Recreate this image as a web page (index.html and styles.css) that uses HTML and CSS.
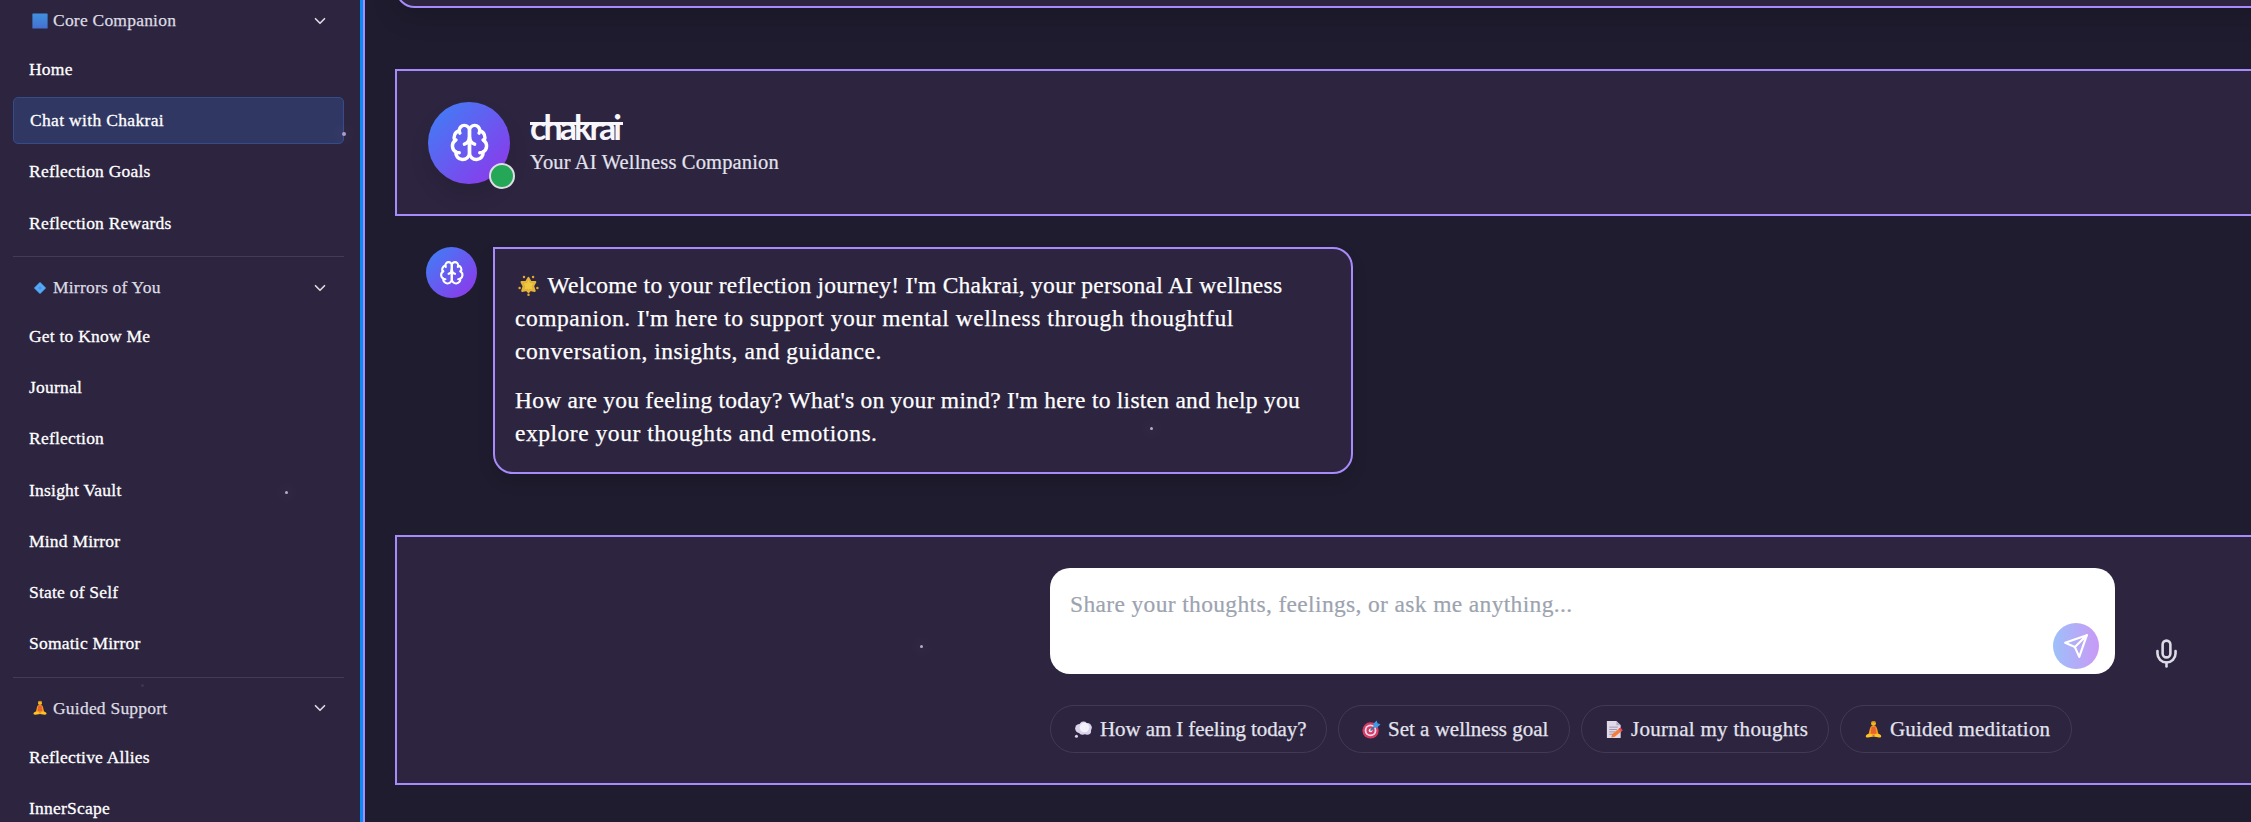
FILE: index.html
```html
<!DOCTYPE html>
<html lang="en">
<head>
<meta charset="utf-8">
<title>Chakrai</title>
<link rel="stylesheet" href="styles.css">
</head>
<body>
<svg class="defs" aria-hidden="true">
  <symbol id="brain" viewBox="0 0 24 24">
    <path d="M12 5a3 3 0 1 0-5.997.125 4 4 0 0 0-2.526 5.77 4 4 0 0 0 .556 6.588A4 4 0 1 0 12 18Z"/>
    <path d="M12 5a3 3 0 1 1 5.997.125 4 4 0 0 1 2.526 5.77 4 4 0 0 1-.556 6.588A4 4 0 1 1 12 18Z"/>
    <path d="M15 13a4.5 4.5 0 0 1-3-4 4.500 4.500 0 0 1-3 4"/>
    <path d="M17.599 6.500a3 3 0 0 0 .399-1.375M6.003 5.125A3 3 0 0 0 6.401 6.500M3.477 10.896a4 4 0 0 1 .585-.396M19.938 10.500a4 4 0 0 1 .585.396M6 18a4 4 0 0 1-1.967-.516M19.967 17.484A4 4 0 0 1 18 18"/>
  </symbol>
  <symbol id="chevron" viewBox="0 0 24 24"><path d="m6 9 6 6 6-6"/></symbol>
  <symbol id="yoga" viewBox="0 0 18 20">
    <circle cx="9" cy="3.600" r="2.600" fill="#f5b91f"/>
    <path d="M6.700 3.300C6.600.7 11.400.7 11.300 3.300 10.300 2 7.700 2 6.700 3.300Z" fill="#c9781f"/>
    <path d="M9 6c2.600 0 3.400 1.200 3.900 3.500l1.500 6H3.600l1.500-6C5.600 7.200 6.400 6 9 6Z" fill="#f39a1e"/>
    <path d="M7 7h4l1 7.500H6Z" fill="#e8642f"/>
    <path d="M1.200 16c2-2 4.800-2 7.800-1 3-1 5.800-1 7.800 1 1 1.600-.4 2.600-2 2.400L9 17.400l-5.800 1C1.600 18.600.2 17.600 1.200 16Z" fill="#ffc421"/>
    <path d="M7 15.500h4l-2 1.500Z" fill="#d9682c"/>
  </symbol>
</svg>

<div class="app">
  <nav class="sidebar">
    <section class="group">
      <div class="group-head">
        <svg class="emoji" viewBox="0 0 16 16"><defs><linearGradient id="sq" x1="0" y1="0" x2="0" y2="1"><stop stop-color="#3f92e0"/><stop offset="1" stop-color="#456fd0"/></linearGradient></defs><rect x=".4" y=".4" width="15.200" height="15.200" rx=".6" fill="url(#sq)"/></svg>
        <span>Core Companion</span><svg class="chev"><use href="#chevron"/></svg>
      </div>
      <a class="item">Home</a>
      <a class="item active">Chat with Chakrai</a>
      <a class="item">Reflection Goals</a>
      <a class="item">Reflection Rewards</a>
    </section>
    <section class="group">
      <div class="group-head">
        <svg class="emoji" viewBox="0 0 16 16"><path d="M8 2.500 13.500 8 8 13.500 2.500 8Z" fill="#55aaf8" stroke="#55aaf8" stroke-width="1" stroke-linejoin="round"/><path d="M8 6 10 8 8 10 6 8Z" fill="#3f98f2"/></svg>
        <span>Mirrors of You</span><svg class="chev"><use href="#chevron"/></svg>
      </div>
      <a class="item">Get to Know Me</a>
      <a class="item">Journal</a>
      <a class="item">Reflection</a>
      <a class="item">Insight Vault</a>
      <a class="item">Mind Mirror</a>
      <a class="item">State of Self</a>
      <a class="item">Somatic Mirror</a>
    </section>
    <section class="group">
      <div class="group-head">
        <svg class="emoji"><use href="#yoga"/></svg>
        <span>Guided Support</span><svg class="chev"><use href="#chevron"/></svg>
      </div>
      <a class="item">Reflective Allies</a>
      <a class="item">InnerScape</a>
    </section>
  </nav>

  <main class="main">
    <div class="prev-card"></div>

    <header class="panel chat-head">
      <div class="avatar large"><svg class="brain"><use href="#brain"/></svg><span class="status"></span></div>
      <div class="who">
        <h1 class="brand">chakrai</h1>
        <p class="tagline">Your AI Wellness Companion</p>
      </div>
    </header>

    <div class="message">
      <div class="avatar small"><svg class="brain"><use href="#brain"/></svg></div>
      <div class="bubble">
        <p><svg class="star" viewBox="0 0 22 22"><g fill="#e3a92c"><path d="m11 3 2.300 4.200 4.900.1-2.300 4.200 1.700 5.200-4.900-.8L11 18l-2-2.100-4.700.8 1.500-5-2.200-4.300 4.900-.3Z" stroke="#e3b53a" stroke-width="2" stroke-linejoin="round"/><circle cx="6.300" cy="2" r="1.300"/><circle cx="15.800" cy="2" r="1.300"/><circle cx="1.700" cy="13.600" r="1.300"/><circle cx="20.300" cy="13.600" r="1.300"/><circle cx="11" cy="20.600" r="1.300"/></g><path d="m11 5 1.700 3.500 3.500.2-1.800 3 .9 3.300-3.300-.6-1 1.200-1.200-1.200-3.100.6.9-3.200-1.700-3 3.500-.3Z" fill="#f0c944"/></svg><span class="snug">Welcome to your reflection journey! I'm Chakrai, your personal AI wellness</span><br>companion. I'm here to support your mental wellness through thoughtful<br>conversation, insights, and guidance.</p>
        <p><span class="snug">How are you feeling today? What's on your mind? I'm here to listen and help you</span><br>explore your thoughts and emotions.</p>
      </div>
    </div>

    <footer class="panel composer">
      <div class="composer-inner">
        <div class="input-row">
          <div class="input">
            <span class="placeholder">Share your thoughts, feelings, or ask me anything...</span>
            <button class="send" aria-label="Send"><svg viewBox="0 0 24 24"><path d="m22 2-7 20-4-9-9-4Z"/><path d="M22 2 11 13"/></svg></button>
          </div>
          <button class="mic" aria-label="Voice"><svg viewBox="0 0 24 24"><path d="M12 2a3 3 0 0 0-3 3v7a3 3 0 0 0 6 0V5a3 3 0 0 0-3-3Z"/><path d="M19 10v2a7 7 0 0 1-14 0v-2"/><path d="M12 19v3"/></svg></button>
        </div>
        <div class="chips">
          <button class="chip c1"><svg viewBox="0 0 20 20"><g fill="#d9d2ea"><circle cx="6" cy="9" r="4.800"/><circle cx="10" cy="6.500" r="4.800"/><circle cx="14" cy="8" r="4.800"/><circle cx="9" cy="11.500" r="4"/><circle cx="14" cy="11.500" r="4"/><circle cx="2.600" cy="17" r="1.600"/></g><circle cx="11" cy="8" r="5" fill="#f4f1fa"/></svg><span>How am I feeling today?</span></button>
          <button class="chip c2"><svg viewBox="0 0 20 20"><circle cx="9" cy="11" r="8.600" fill="#d83a63"/><circle cx="9" cy="11" r="6.200" fill="#eadcea"/><circle cx="9" cy="11" r="4.300" fill="#d83a63"/><circle cx="9" cy="11" r="2" fill="#eadcea"/><path d="m9 11 6-6" stroke="#2477b8" stroke-width="1.600"/><path d="m12.500 7.500-.5-3.500L15.500.5l.8 3 3.200.9L16 8Z" fill="#3b9be6"/></svg><span>Set a wellness goal</span></button>
          <button class="chip c3"><svg viewBox="0 0 20 20"><path d="M2 1h10l4.500 4.500V19H2Z" fill="#e0d9e8"/><path d="M12 1v4.500h4.500Z" fill="#b5abc4"/><path d="M4.500 7.500h9M4.500 10h8M4.500 12.500h6M4.500 15h4" stroke="#9d93ad" stroke-width="1"/><path d="m6.500 18.500 1-3.500 8-6.500 2.500 2.800-8 6.500Z" fill="#f47c3c"/><path d="m14.500 9.300 1.800-1.400 2.500 2.800-1.800 1.400Z" fill="#e8435f"/></svg><span>Journal my thoughts</span></button>
          <button class="chip c4"><svg><use href="#yoga"/></svg><span>Guided meditation</span></button>
        </div>
      </div>
    </footer>
  </main>
</div>

<i class="spark s1"></i><i class="spark s2"></i><i class="spark s3"></i><i class="spark s4"></i><i class="spark s5"></i>
</body>
</html>
```
FILE: styles.css
```css
* { box-sizing: border-box; margin: 0; padding: 0; }

body {
  width: 2251px;
  height: 822px;
  overflow: hidden;
  background: #1e1c2e;
  color: #fff;
  font-family: "Liberation Serif", serif;
}

button { border: 0; background: none; color: inherit; font: inherit; }

.defs { position: absolute; width: 0; height: 0; }

.app { display: flex; height: 822px; overflow: hidden; }

/* Sidebar */
.sidebar {
  flex: none;
  width: 365px;
  height: 822px;
  overflow: hidden;
  padding: 0 16px 0 13px;
  background: #2d2540;
  border-right: 2px solid #a78bfa;
  box-shadow: inset -3px 0 0 #0a8cf5;
  letter-spacing: .22px;
}

.group { display: flex; flex-direction: column; gap: 5.200px; width: 331px; }
.group + .group { margin-top: 9.900px; padding-top: 10px; border-top: 1px solid #443b56; }

.group-head {
  flex: none;
  display: flex;
  align-items: center;
  height: 41px;
  padding: 0 15px 0 19px;
  color: #dddce3;
  font-size: 17.500px;
  -webkit-text-stroke: .25px;
}
.group-head span { flex: 1; margin-left: 5px; }
.emoji { width: 16px; height: 16px; }
.chev { width: 18px; height: 18px; fill: none; stroke: #dddce3; stroke-width: 2.200; stroke-linecap: round; stroke-linejoin: round; }

.item {
  flex: none;
  display: flex;
  align-items: center;
  height: 46.100px;
  padding: 0 16px;
  border-radius: 5px;
  font-size: 17.500px;
  -webkit-text-stroke: .3px;
}
.item.active { border: 1px solid #344c8c; background: #313763; letter-spacing: .33px; }

/* Main column */
.main { flex: none; width: 1950px; padding-left: 30px; }

/* Only the lower edge of this card shows above the fold */
.prev-card {
  height: 48px;
  margin-top: -40px;
  border: 2px solid #a78bfa;
  border-radius: 20px;
  background: #2d2540;
  box-shadow: 0 10px 24px rgba(0, 0, 0, .15);
}

.panel { border: 2px solid #a78bfa; background: #2d2540; }

.chat-head { display: flex; align-items: center; gap: 20px; height: 147px; margin-top: 61px; padding: 0 31px; }

.avatar {
  flex: none;
  display: flex;
  align-items: center;
  justify-content: center;
  border-radius: 50%;
  background: linear-gradient(135deg, #3b82f6, #9333ea);
}
.avatar.large { position: relative; width: 82px; height: 82px; box-shadow: 0 12px 20px rgba(0, 0, 0, .12); }
.avatar.small { width: 51px; height: 51px; }
.brain { width: 41px; height: 41px; fill: none; stroke: #fff; stroke-width: 2; stroke-linecap: round; stroke-linejoin: round; }
.small .brain { width: 25.600px; height: 25.600px; }

.status {
  position: absolute;
  right: -5px;
  bottom: -5px;
  width: 26px;
  height: 26px;
  border: 2px solid #dfdde6;
  border-radius: 50%;
  background: #24a757;
}

/* Wordmark with a headline bar running through the letters */
.brand {
  width: 93px;
  height: 36px;
  margin-bottom: 3px;
  font: 700 34px/34px Lato, sans-serif;
  letter-spacing: -2.900px;
  color: #f6f6fb;
  background: linear-gradient(#f6f6fb, #f6f6fb) 0 12px / 93px 3px no-repeat;
  white-space: nowrap;
}
.tagline { font-size: 20.500px; line-height: 26px; letter-spacing: .16px; color: #e3e3ee; -webkit-text-stroke: .2px; }

.message { display: flex; align-items: flex-start; gap: 16px; margin: 31px 0 0 31px; }

.bubble {
  width: 860px;
  height: 227px;
  padding: 20px;
  border: 2px solid #a78bfa;
  border-radius: 0 20px 20px 20px;
  background: #2d2540;
  box-shadow: 0 8px 16px rgba(0, 0, 0, .12);
  font-size: 23.500px;
  line-height: 32.900px;
  letter-spacing: .53px;
  white-space: nowrap;
  -webkit-text-stroke: .25px;
}
.snug { letter-spacing: .26px; }
.bubble p + p { margin-top: 16.500px; }
.star { width: 21px; height: 21px; margin: 0 8.500px 0 3px; vertical-align: -3px; }

/* Composer */
.composer { height: 250px; margin-top: 61px; padding: 31px 0 0 653px; }
.composer-inner { width: 1150px; }
.input-row { display: flex; align-items: flex-end; gap: 36px; }

.input {
  display: flex;
  justify-content: space-between;
  align-items: flex-end;
  width: 1065px;
  height: 106px;
  padding: 0 16px 5px 20px;
  border-radius: 20px;
  background: #fff;
}
.placeholder { align-self: flex-start; margin-top: 20px; color: #9ca3af; font-size: 23.500px; line-height: 32px; letter-spacing: .35px; -webkit-text-stroke: .2px; }
.send {
  display: flex;
  align-items: center;
  justify-content: center;
  width: 46px;
  height: 46px;
  border-radius: 50%;
  background: linear-gradient(90deg, #9dc0fa, #c999f5);
}
.send svg, .mic svg { fill: none; stroke: #fff; stroke-width: 2; stroke-linecap: round; stroke-linejoin: round; }
.send svg { width: 26px; height: 26px; }
.mic { height: 41px; }
.mic svg { display: block; width: 31px; height: 31px; stroke: #dddce6; }

.chips { display: flex; gap: 11px; margin-top: 31px; }
.chip {
  display: flex;
  align-items: center;
  height: 48px;
  padding-left: 23px;
  border: 1px solid #423953;
  border-radius: 24px;
  color: #e3e3ee;
  font-size: 21px;
  white-space: nowrap;
  -webkit-text-stroke: .25px;
}
.chip svg { flex: none; width: 19px; height: 19px; margin-right: 7px; }
.c1 { width: 277px; letter-spacing: -.1px; }
.c2 { width: 232px; }
.c3 { width: 248px; letter-spacing: .3px; }
.c4 { width: 232px; letter-spacing: .2px; }

.spark {
  position: absolute;
  width: 3px;
  height: 3px;
  border-radius: 50%;
  background: #b5aec2;
  box-shadow: 0 0 14px 7px rgba(255, 255, 255, .025);
}
.s1 { left: 342px; top: 132px; width: 4px; height: 4px; background: #a99fc8; }
.s2 { left: 285px; top: 491px; }
.s3 { left: 1150px; top: 427px; }
.s4 { left: 920px; top: 645px; }
.s5 { left: 141px; top: 684px; opacity: .12; }
```
